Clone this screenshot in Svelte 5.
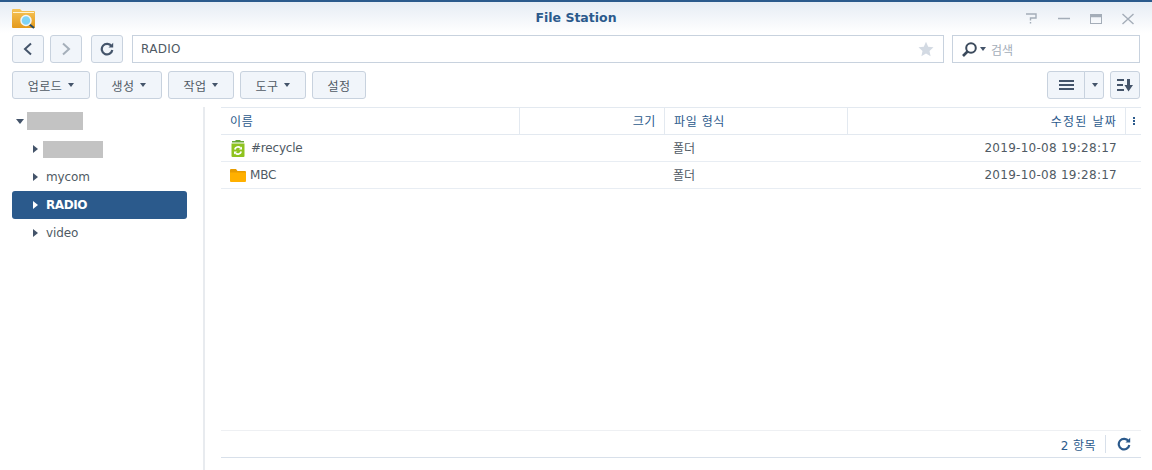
<script>
  const menus = [
    { label: '업로드', w: 78 },
    { label: '생성', w: 66 },
    { label: '작업', w: 66 },
    { label: '도구', w: 66 }
  ];
  const columns = [
    { label: '이름', cls: 'name' },
    { label: '크기', cls: 'size' },
    { label: '파일 형식', cls: 'type' },
    { label: '수정된 날짜', cls: 'date' }
  ];
  const files = [
    { name: '#recycle', icon: 'recycle', type: '폴더', date: '2019-10-08 19:28:17' },
    { name: 'MBC', icon: 'folder', type: '폴더', date: '2019-10-08 19:28:17' }
  ];
  const tree = [
    { label: 'mycom' },
    { label: 'RADIO', active: true },
    { label: 'video' }
  ];
</script>

<div class="window">
  <header class="titlebar">
    <svg class="app-icon" width="26" height="22" viewBox="0 0 26 22">
      <defs>
        <linearGradient id="fold" x1="0" y1="0" x2="0" y2="1">
          <stop offset="0" stop-color="#f6c458" />
          <stop offset="1" stop-color="#e49a1c" />
        </linearGradient>
      </defs>
      <path d="M1 3q0-1 1-1h7l2 2h12q1 0 1 1v15q0 1-1 1H2q-1 0-1-1z" fill="url(#fold)" />
      <rect x="2" y="5" width="21" height="1" fill="#fff3d0" />
      <line x1="18" y1="17" x2="23" y2="21" stroke="#2a4a60" stroke-width="2" />
      <circle cx="15" cy="13.500" r="5" fill="#7fd3f5" stroke="#f2f5f7" stroke-width="1.500" />
    </svg>
    <span class="title">File Station</span>
    <div class="win-controls">
      <svg width="12" height="12" viewBox="0 0 12 12" fill="none" stroke="#a4adb8" stroke-width="1.400">
        <path d="M0 1h10v4H4.500v2.500M4.500 9v1.500" />
      </svg>
      <svg width="12" height="12" viewBox="0 0 12 12" fill="none" stroke="#a4adb8" stroke-width="1.500">
        <path d="M0 5.500h12" />
      </svg>
      <svg width="12" height="12" viewBox="0 0 12 12" fill="none" stroke="#a4adb8">
        <rect x="0.500" y="1.500" width="11" height="9" />
        <path d="M0 3h12" stroke-width="2.500" />
      </svg>
      <svg width="12" height="12" viewBox="0 0 12 12" fill="none" stroke="#a4adb8" stroke-width="1.400">
        <path d="M.5 1l11 10M11.500 1l-11 10" />
      </svg>
    </div>
  </header>

  <div class="toolbar">
    <button class="btn square" aria-label="back">
      <svg width="12" height="14" viewBox="0 0 12 14" fill="none" stroke="#44546a" stroke-width="2"><path d="M9 1.500L3 7l6 5.500" /></svg>
    </button>
    <button class="btn square" aria-label="forward">
      <svg width="12" height="14" viewBox="0 0 12 14" fill="none" stroke="#a5afba" stroke-width="2"><path d="M3 1.500L9 7l-6 5.500" /></svg>
    </button>
    <button class="btn square refresh" aria-label="refresh">
      <svg width="14" height="14" viewBox="0 0 14 14" fill="none" stroke="#44546a" stroke-width="2.200"><path d="M11.500 4.200A5.300 5.300 0 1 0 12.300 8" /><path d="M8.500 5.500h4.700V.8z" fill="#44546a" stroke="none" /></svg>
    </button>
    <div class="path">
      <span>RADIO</span>
      <svg width="16" height="16" viewBox="0 0 16 16"><path d="M8 .8l2.200 4.900 5.300.6-4 3.600 1.100 5.300L8 12.500l-4.600 2.700 1.100-5.300-4-3.600 5.300-.6z" fill="#d3dae3" /></svg>
    </div>
    <div class="search">
      <svg width="17" height="17" viewBox="0 0 17 17" fill="none" stroke="#3b4a5c"><circle cx="10" cy="7" r="4.800" stroke-width="2" /><path d="M6.500 10.500L2 15" stroke-width="2.600" /></svg>
      <i class="caret small"></i>
      <span>검색</span>
    </div>
  </div>

  <div class="toolbar second">
    {#each menus as m}
      <button class="btn menu" style="width: {m.w}px">{m.label}<i class="caret"></i></button>
    {/each}
    <button class="btn menu" style="width: 54px">설정</button>
    <div class="spacer"></div>
    <div class="split">
      <button class="btn view" aria-label="list view">
        <svg width="15" height="12" viewBox="0 0 15 12" fill="#44546a"><rect width="15" height="2" y="1" /><rect width="15" height="2" y="5" /><rect width="15" height="2" y="9" /></svg>
      </button>
      <button class="btn drop" aria-label="view options"><i class="caret small"></i></button>
    </div>
    <button class="btn sort" aria-label="sort">
      <svg width="16" height="14" viewBox="0 0 16 14" fill="#44546a"><rect x="0" y="1" width="7" height="2" /><rect x="0" y="6" width="6" height="2" /><rect x="0" y="11" width="7" height="2" /><path d="M10 1h3v6h3l-4.500 6.500L7.500 7H10z" /></svg>
    </button>
  </div>

  <div class="body">
    <aside class="sidebar">
      <div class="node root"><i class="arrow down"></i><span class="mask m1"></span></div>
      <div class="node"><i class="arrow"></i><span class="mask m2"></span></div>
      {#each tree as t}
        <div class="node" class:active={t.active}><i class="arrow"></i><span>{t.label}</span></div>
      {/each}
    </aside>

    <section class="main">
      <div class="thead">
        {#each columns as c}
          <div class="th {c.cls}">{c.label}</div>
        {/each}
        <div class="th more"><i></i><i></i><i></i></div>
      </div>
      {#each files as f}
        <div class="tr">
          <div class="td name">
            {#if f.icon === 'recycle'}
              <svg width="16" height="17" viewBox="0 0 16 17">
                <path d="M5.500 0h5v1H14v1.500H2V1h3.500z" fill="#6aa835" />
                <path d="M1.500 3.500h13V16q0 1-1 1h-11q-1 0-1-1z" fill="#8fc31f" />
                <path d="M4.800 9.500a3.400 3.400 0 0 1 5.700-1.600M11.200 11.500a3.400 3.400 0 0 1-5.700 1.600" fill="none" stroke="#fff" stroke-width="1.700" />
                <path d="M9 9.400h3V6.400zM7 11.600H4v3z" fill="#fff" />
              </svg>
            {:else}
              <svg class="folder" width="16" height="14" viewBox="0 0 16 14">
                <path d="M1 1h5l1.500 2H15q1 0 1 1v1H0V2q0-1 1-1z" fill="#e89c00" />
                <path d="M0 4.500h16V13q0 1-1 1H1q-1 0-1-1z" fill="#ffb000" />
              </svg>
            {/if}
            <span>{f.name}</span>
          </div>
          <div class="td size"></div>
          <div class="td type">{f.type}</div>
          <div class="td date">{f.date}</div>
          <div class="td more"></div>
        </div>
      {/each}
      <div class="fill"></div>
      <footer class="status">
        <span>2 항목</span>
        <button class="reload" aria-label="reload">
          <svg width="14" height="14" viewBox="0 0 14 14" fill="none" stroke="#2b5a8c" stroke-width="2.200"><path d="M11.500 4.200A5.300 5.300 0 1 0 12.300 8" /><path d="M8.500 5.500h4.700V.8z" fill="#2b5a8c" stroke="none" /></svg>
        </button>
      </footer>
    </section>
  </div>
</div>

<style>
  :global(body) {
    margin: 0;
    background: #fff;
  }

  .window {
    display: flex;
    flex-direction: column;
    width: 1152px;
    height: 470px;
    overflow: hidden;
    font-family: "DejaVu Sans", "Noto Sans CJK KR", sans-serif;
    font-size: 12px;
    color: #505a64;
    background: #fff;
  }

  .titlebar {
    position: relative;
    display: flex;
    align-items: center;
    justify-content: center;
    height: 33px;
    flex: none;
    box-sizing: border-box;
    border-top: 2px solid #2b5a8c;
    background: linear-gradient(#e6ecf4, #fff);
  }

  .app-icon {
    position: absolute;
    left: 11px;
    top: 5px;
  }

  .title {
    font-size: 12.5px;
    font-weight: 700;
    color: #2b5a8c;
    margin-top: -1px;
  }

  .win-controls {
    position: absolute;
    right: 18px;
    top: 11px;
    display: flex;
    gap: 20px;
  }

  .toolbar {
    display: flex;
    align-items: center;
    gap: 6px;
    flex: none;
    height: 28px;
    padding: 2px 12px 0;
  }

  .toolbar.second {
    margin-top: 6px;
  }

  .btn {
    display: flex;
    align-items: center;
    justify-content: center;
    box-sizing: border-box;
    height: 28px;
    padding: 0;
    border: 1px solid #c8d2de;
    border-radius: 3px;
    background: #f1f5fa;
    font: inherit;
    color: #505a64;
  }

  .menu {
    letter-spacing: 0.4px;
  }

  .square {
    width: 32px;
    flex: none;
  }

  .sort {
    width: 30px;
    flex: none;
  }

  .refresh {
    margin-left: 3px;
  }

  .path {
    display: flex;
    align-items: center;
    justify-content: space-between;
    box-sizing: border-box;
    width: 812px;
    height: 28px;
    margin-left: 3px;
    padding: 0 9px 0 8px;
    border: 1px solid #c8d2de;
    background: #fff;
    font-size: 12px;
    letter-spacing: 0.3px;
  }

  .search {
    display: flex;
    align-items: center;
    box-sizing: border-box;
    width: 188px;
    height: 28px;
    margin-left: 2px;
    padding-left: 8px;
    border: 1px solid #c8d2de;
    background: #fff;
    color: #a3adb8;
  }

  .search span {
    margin-left: 5px;
  }

  .caret {
    display: inline-block;
    width: 0;
    height: 0;
    margin-left: 6px;
    border: 3px solid transparent;
    border-top: 4px solid #44546a;
    border-bottom: 0;
  }

  .caret.small {
    margin-left: 2px;
  }

  .spacer {
    flex: 1;
  }

  .split {
    display: flex;
  }

  .view {
    width: 38px;
    border-radius: 3px 0 0 3px;
  }

  .drop {
    width: 20px;
    margin-left: -1px;
    border-radius: 0 3px 3px 0;
  }

  .body {
    display: flex;
    flex: 1;
    min-height: 0;
    margin-top: 8px;
  }

  .sidebar {
    flex: none;
    box-sizing: border-box;
    width: 205px;
    height: 363px;
    padding: 0 16px 0 12px;
    border-right: 2px solid #e8ebef;
  }

  .node {
    display: flex;
    align-items: center;
    height: 28px;
    padding-left: 21px;
  }

  .node.root {
    padding-left: 4px;
  }

  .node span {
    margin-left: 8px;
    letter-spacing: -0.1px;
  }

  .active {
    background: #2b5a8c;
    border-radius: 3px;
    color: #fff;
    font-weight: 700;
  }

  .active span {
    letter-spacing: -0.4px;
  }

  .arrow {
    width: 0;
    height: 0;
    border: 4px solid transparent;
    border-left: 5px solid #44546a;
    border-right: 0;
  }

  .active .arrow {
    border-left-color: #fff;
  }

  .arrow.down {
    border: 4px solid transparent;
    border-top: 5px solid #44546a;
    border-bottom: 0;
  }

  .mask {
    display: block;
    background: #c3c3c3;
  }

  .node .m1 {
    width: 56px;
    height: 18px;
    margin-left: 3px;
  }

  .node .m2 {
    width: 60px;
    height: 17px;
    margin-left: 5px;
  }

  .main {
    display: flex;
    flex-direction: column;
    width: 920px;
    height: 350px;
    margin-left: 16px;
    border-top: 1px solid #e3e9f0;
  }

  .thead,
  .tr {
    display: flex;
    flex: none;
    box-sizing: border-box;
    height: 27px;
    border-bottom: 1px solid #e8edf3;
  }

  .thead {
    color: #2b5a8c;
    border-bottom-color: #e3e9f0;
  }

  .th,
  .td {
    display: flex;
    align-items: center;
    box-sizing: border-box;
    padding: 0 9px;
  }

  .th {
    letter-spacing: 0.6px;
    padding-bottom: 2px;
  }

  .th.size {
    padding-right: 8px;
  }

  .th.date {
    letter-spacing: 1.2px;
  }

  .th + .th {
    border-left: 1px solid #e3e9f0;
  }

  .name {
    width: 298px;
  }

  .size {
    width: 145px;
    justify-content: flex-end;
  }

  .type {
    width: 183px;
  }

  .date {
    width: 278px;
    justify-content: flex-end;
    padding-right: 8px;
    white-space: nowrap;
  }

  .td.date {
    letter-spacing: 0.27px;
  }

  .more {
    width: 16px;
    padding: 0;
    flex-direction: column;
    justify-content: center;
    gap: 1px;
  }

  .more i {
    width: 2px;
    height: 2px;
    background: #2b5a8c;
  }

  .td.name span {
    letter-spacing: -0.2px;
  }

  .td.name svg {
    flex: none;
    margin-right: 5px;
  }

  .td.name .folder {
    margin-right: 4px;
  }

  .td.type {
    padding-bottom: 1px;
  }

  .fill {
    flex: 1;
  }

  .status {
    display: flex;
    align-items: center;
    justify-content: flex-end;
    flex: none;
    box-sizing: border-box;
    height: 28px;
    border-top: 1px solid #eef0f3;
    border-bottom: 1px solid #d8e0ea;
    color: #2b5a8c;
    letter-spacing: 0.4px;
  }

  .reload {
    display: flex;
    align-items: center;
    justify-content: center;
    width: 36px;
    height: 18px;
    margin-left: 9px;
    padding: 0;
    border: 0;
    border-left: 1px solid #d8e0ea;
    background: none;
  }
</style>
